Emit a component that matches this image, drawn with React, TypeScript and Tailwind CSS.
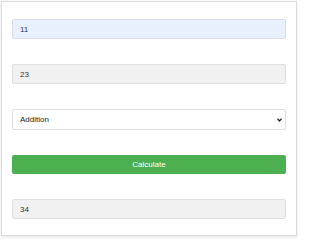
import { useState } from "react";

const App = () => {
  const [a, setA] = useState("11");
  const [b, setB] = useState("23");
  const [op, setOp] = useState("add");
  const [result, setResult] = useState("34");

  const calculate = () => {
    const x = parseFloat(a);
    const y = parseFloat(b);
    if (isNaN(x) || isNaN(y)) return;
    let r = 0;
    if (op === "add") r = x + y;
    else if (op === "sub") r = x - y;
    else if (op === "mul") r = x * y;
    else r = y === 0 ? NaN : x / y;
    setResult(String(r));
  };

  return (
    <div className="w-[300px] h-[241px] bg-white pt-px pl-px" style={{ fontFamily: '"Liberation Sans", Arial, sans-serif' }}>
      <div className="w-[296px] h-[235px] border border-[#dcdcdc] bg-white shadow-[0_1px_3px_rgba(0,0,0,0.12)] px-[10px] pt-[17px] flex flex-col gap-[25px]">
        <input
          value={a}
          onChange={(e) => setA(e.target.value)}
          className="block h-[20px] w-full rounded-[2px] border border-[#d6dde8] bg-[#e8f0fe] px-[7px] text-[8px] text-[#333] outline-none"
        />
        <input
          value={b}
          onChange={(e) => setB(e.target.value)}
          className="block h-[20px] w-full rounded-[2px] border border-[#dedede] bg-[#f1f1f1] px-[7px] text-[8px] text-[#333] outline-none"
        />
        <div className="relative h-[21px]">
          <select
            value={op}
            onChange={(e) => setOp(e.target.value)}
            className="block h-[21px] w-full appearance-none rounded-[2px] border border-[#dedede] bg-white px-[7px] text-[8px] text-[#222] outline-none"
          >
            <option value="add">Addition</option>
            <option value="sub">Subtraction</option>
            <option value="mul">Multiplication</option>
            <option value="div">Division</option>
          </select>
          {/* small chevron like Chrome's native arrow */}
          <svg
            className="pointer-events-none absolute right-[4px] top-[9px]"
            width="5"
            height="4"
            viewBox="0 0 5 4"
          >
            <path d="M0.5 0.8 L2.5 3 L4.5 0.8" fill="none" stroke="#222" strokeWidth="1.3" />
          </svg>
        </div>
        <button
          onClick={calculate}
          className="block h-[19px] w-full rounded-[2px] bg-[#4caf50] text-[8px] text-white"
        >
          Calculate
        </button>
        <input
          value={result}
          readOnly
          className="block h-[20px] w-full rounded-[2px] border border-[#dedede] bg-[#f1f1f1] px-[7px] text-[8px] text-[#333] outline-none"
        />
      </div>
    </div>
  );
};

export default App;
